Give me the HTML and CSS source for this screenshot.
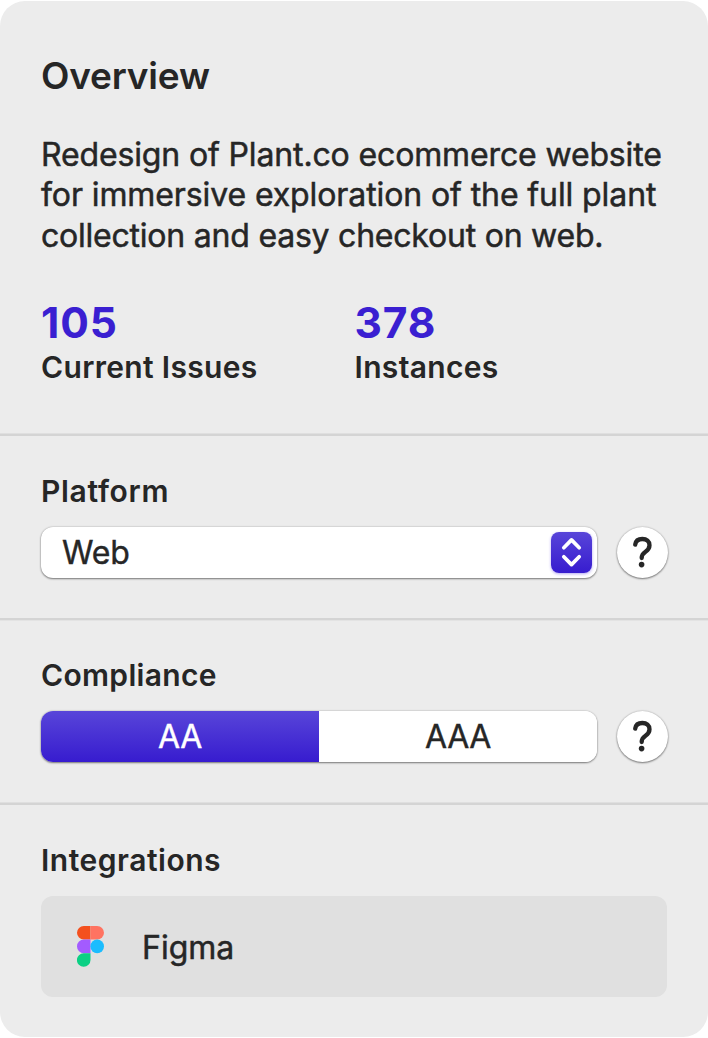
FILE: index.html
```html
<!DOCTYPE html>
<html lang="en">
<head>
<meta charset="utf-8">
<title>Overview</title>
<link rel="stylesheet" href="styles.css">
</head>
<body>
<main class="panel">
  <section class="overview">
    <h1 class="title">Overview</h1>
    <p class="description"><span class="line line-a">Redesign of Plant.co ecommerce website</span><span class="line line-b">for immersive exploration of the full plant</span><span class="line line-c">collection and easy checkout on web.</span></p>
    <div class="stats">
      <div><div class="number">105</div><div class="label">Current Issues</div></div>
      <div><div class="number">378</div><div class="label">Instances</div></div>
    </div>
  </section>
  <hr class="divider">
  <section class="field field-platform">
    <h2 class="label label-platform">Platform</h2>
    <div class="row">
      <button class="select" type="button">
        <span class="value">Web</span>
        <span class="stepper"><svg width="41" height="41" viewBox="0 0 41 41"><path d="M12.8 15.8 20.5 7.9l7.7 7.9M12.8 24.7l7.7 7.9 7.7-7.9"/></svg></span>
      </button>
      <button class="help" type="button" aria-label="Help"><svg width="51" height="51" viewBox="0 0 51 51"><path d="M18.2 17.6C18.8 13.7 21.6 12 25.3 12c4.4 0 7.2 2.4 7.2 6.3 0 2.9-1.4 4.6-4 6.4-2.8 1.9-3.8 3.2-3.8 6.3"/><circle cx="24.6" cy="37.6" r="2.8"/></svg></button>
    </div>
  </section>
  <hr class="divider divider-middle">
  <section class="field">
    <h2 class="label">Compliance</h2>
    <div class="row">
      <div class="segments">
        <button class="segment selected" type="button">AA</button>
        <button class="segment" type="button">AAA</button>
      </div>
      <button class="help" type="button" aria-label="Help"><svg width="51" height="51" viewBox="0 0 51 51"><path d="M18.2 17.6C18.8 13.7 21.6 12 25.3 12c4.4 0 7.2 2.4 7.2 6.3 0 2.9-1.4 4.6-4 6.4-2.8 1.9-3.8 3.2-3.8 6.3"/><circle cx="24.6" cy="37.6" r="2.8"/></svg></button>
    </div>
  </section>
  <hr class="divider">
  <section class="field field-integrations">
    <h2 class="label label-integrations">Integrations</h2>
    <div class="integration">
      <svg class="figma" width="27" height="41" viewBox="0 0 27 41">
        <path fill="#f4501e" d="M13.5 0H6.8a6.8 6.8 0 0 0 0 13.6h6.7z"/>
        <path fill="#ff7361" d="M13.5 0h6.7a6.8 6.8 0 0 1 0 13.6h-6.7z"/>
        <path fill="#a35bff" d="M13.5 13.6H6.8a6.8 6.8 0 0 0 0 13.6h6.7z"/>
        <circle fill="#1bbcfe" cx="20.2" cy="20.4" r="6.8"/>
        <path fill="#0bd084" d="M13.5 27.2H6.8a6.8 6.8 0 1 0 6.7 6.8z"/>
      </svg>
      <span class="app">Figma</span>
    </div>
  </section>
</main>
</body>
</html>
```
FILE: styles.css
```css
* { box-sizing: border-box; }
body {
  margin: 0;
  padding-top: 1px;
  background: #fff;
  color: #262626;
  font-family: Inter, "Liberation Sans", sans-serif;
}
h1, h2, p { margin: 0; }
button {
  padding: 0;
  border: 0;
  color: inherit;
  font: inherit;
}
.panel {
  height: 1036px;
  border-radius: 25px;
  background: #ececec;
  white-space: nowrap;
}
.overview {
  height: 432px;
  padding: 53px 41px 0;
}
.title {
  font-size: 37px;
  line-height: 44px;
  font-weight: 600;
  letter-spacing: -0.2px;
}
.description {
  margin-top: 36.5px;
  font-size: 32px;
  line-height: 40.5px;
  font-weight: 400;
  -webkit-text-stroke: 0.5px;
}
.line { display: block; }
.line-a { letter-spacing: -0.14px; }
.line-b { letter-spacing: -0.1px; }
.line-c { letter-spacing: -0.22px; }
.stats {
  display: grid;
  grid-template-columns: 313.5px 1fr;
  margin-top: 42px;
}
.number {
  color: #3a1fd1;
  font-size: 42.5px;
  line-height: 50px;
  font-weight: 700;
  letter-spacing: 0.9px;
}
.stats .label { margin-top: 1px; }
.label {
  font-size: 30px;
  line-height: 36px;
  font-weight: 600;
  letter-spacing: 0.33px;
}
.label-platform { letter-spacing: 0.7px; }
.label-integrations { letter-spacing: 0.52px; }
.divider {
  height: 3px;
  margin: 0;
  border: 0;
  background: linear-gradient(#dfdfdf 1px, #d4d4d4 1px);
}
.divider-middle { background: linear-gradient(#d4d4d4 2px, #e3e3e3 2px); }
.field {
  height: 182px;
  padding: 36px 41px 0;
}
.field-platform, .field-integrations { padding-top: 37px; }
.divider-middle + .field { height: 181px; }
.row {
  display: flex;
  gap: 20px;
  margin-top: 18px;
}
.field-platform .row { margin-top: 17.6px; }
.select, .segments {
  display: flex;
  flex: none;
  width: 556px;
  height: 51px;
  border-radius: 12px;
  background: #fff;
  box-shadow: 0 0 2px rgba(0,0,0,.25), 0 1px 2px rgba(0,0,0,.45);
}
.select {
  align-items: center;
  justify-content: space-between;
  padding: 0 5px 0 21px;
  font-size: 32px;
}
.value { -webkit-text-stroke: 0.4px; letter-spacing: -0.2px; }
.stepper {
  height: 41px;
  border-radius: 8px;
  background: linear-gradient(#5845d9, #371ccf);
  box-shadow: 0 1px 3px rgba(65,35,225,.4);
}
svg { display: block; }
.stepper path {
  fill: none;
  stroke: #fff;
  stroke-width: 3.7;
  stroke-linecap: round;
  stroke-linejoin: round;
}
.help {
  flex: none;
  width: 51px;
  height: 51px;
  border-radius: 50%;
  background: #fff;
  box-shadow: 0 0 2px rgba(0,0,0,.25), 0 1px 2px rgba(0,0,0,.45);
}
.help path {
  fill: none;
  stroke: #262626;
  stroke-width: 4.3;
  stroke-linecap: round;
}
.help circle { fill: #262626; }
.segment {
  flex: 1;
  border-radius: 0 12px 12px 0;
  background: #fff;
  font-size: 32px;
  letter-spacing: -0.4px;
  -webkit-text-stroke: 0.4px;
}
.segment.selected {
  border-radius: 12px 0 0 12px;
  background: linear-gradient(#5845d9, #371ccf);
  color: #fff;
}
.integration {
  display: flex;
  align-items: center;
  height: 101px;
  margin-top: 18px;
  padding-left: 36.4px;
  border-radius: 12px;
  background: #e0e0e0;
}
.app {
  margin: 2px 0 0 37.6px;
  font-size: 32px;
  -webkit-text-stroke: 0.5px;
}
```
